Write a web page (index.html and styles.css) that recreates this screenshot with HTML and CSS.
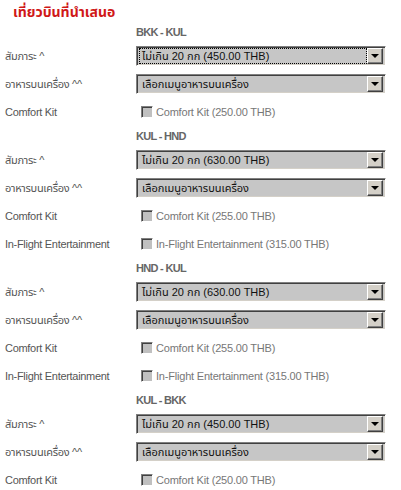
FILE: index.html
```html
<!DOCTYPE html>
<html lang="th">
<head>
  <meta charset="UTF-8" />
  <title>เที่ยวบินที่นำเสนอ</title>
  <link rel="stylesheet" href="styles.css">
</head>
<body>
  <div class="addons">
    <h2 class="title">เที่ยวบินที่นำเสนอ</h2>

    <!-- BKK - KUL -->
    <div class="leg-head">BKK - KUL</div>
    <div class="row">
      <div class="label">สัมภาระ ^</div>
      <div class="select focus"><span class="value">ไม่เกิน 20 กก (450.00 THB)</span><span class="arrow"></span></div>
    </div>
    <div class="row">
      <div class="label">อาหารบนเครื่อง ^^</div>
      <div class="select"><span class="value">เลือกเมนูอาหารบนเครื่อง</span><span class="arrow"></span></div>
    </div>
    <div class="row">
      <div class="label">Comfort Kit</div>
      <label class="check"><span class="box"></span>Comfort Kit (250.00 THB)</label>
    </div>

    <!-- KUL - HND -->
    <div class="leg-head">KUL - HND</div>
    <div class="row">
      <div class="label">สัมภาระ ^</div>
      <div class="select"><span class="value">ไม่เกิน 20 กก (630.00 THB)</span><span class="arrow"></span></div>
    </div>
    <div class="row">
      <div class="label">อาหารบนเครื่อง ^^</div>
      <div class="select"><span class="value">เลือกเมนูอาหารบนเครื่อง</span><span class="arrow"></span></div>
    </div>
    <div class="row">
      <div class="label">Comfort Kit</div>
      <label class="check"><span class="box"></span>Comfort Kit (255.00 THB)</label>
    </div>
    <div class="row">
      <div class="label">In-Flight Entertainment</div>
      <label class="check"><span class="box"></span>In-Flight Entertainment (315.00 THB)</label>
    </div>

    <!-- HND - KUL -->
    <div class="leg-head">HND - KUL</div>
    <div class="row">
      <div class="label">สัมภาระ ^</div>
      <div class="select"><span class="value">ไม่เกิน 20 กก (630.00 THB)</span><span class="arrow"></span></div>
    </div>
    <div class="row">
      <div class="label">อาหารบนเครื่อง ^^</div>
      <div class="select"><span class="value">เลือกเมนูอาหารบนเครื่อง</span><span class="arrow"></span></div>
    </div>
    <div class="row">
      <div class="label">Comfort Kit</div>
      <label class="check"><span class="box"></span>Comfort Kit (255.00 THB)</label>
    </div>
    <div class="row">
      <div class="label">In-Flight Entertainment</div>
      <label class="check"><span class="box"></span>In-Flight Entertainment (315.00 THB)</label>
    </div>

    <!-- KUL - BKK -->
    <div class="leg-head">KUL - BKK</div>
    <div class="row">
      <div class="label">สัมภาระ ^</div>
      <div class="select"><span class="value">ไม่เกิน 20 กก (450.00 THB)</span><span class="arrow"></span></div>
    </div>
    <div class="row">
      <div class="label">อาหารบนเครื่อง ^^</div>
      <div class="select"><span class="value">เลือกเมนูอาหารบนเครื่อง</span><span class="arrow"></span></div>
    </div>
    <div class="row">
      <div class="label">Comfort Kit</div>
      <label class="check"><span class="box"></span>Comfort Kit (250.00 THB)</label>
    </div>
  </div>
</body>
</html>
```

FILE: styles.css
```css
body {
  margin: 0;
  background: #fff;
  font-family: "Liberation Sans", Tahoma, "Noto Sans Thai", "Noto Sans", sans-serif;
  font-size: 11px;
  color: #555;
}

.addons {
  padding: 0 5px;
}

.title {
  margin: 0;
  height: 22px;
  line-height: 24px;
  padding-left: 8px;
  font-size: 14px;
  font-weight: bold;
  color: #d01818;
}

.leg-head {
  height: 20px;
  line-height: 20px;
  padding-left: 131px;
  font-size: 11px;
  font-weight: bold;
  letter-spacing: -0.7px;
  color: #666;
}

.row {
  display: grid;
  grid-template-columns: 131px 250px;
  align-items: center;
  height: 28px;
}

.label {
  letter-spacing: -0.3px;
  white-space: nowrap;
}

.select {
  display: flex;
  align-items: center;
  height: 20px;
  box-sizing: border-box;
  background: #c6c6c6;
  border: 1px solid;
  border-color: #808080 #fff #fff #808080;
  box-shadow: inset 1px 1px 0 #404040, inset -1px -1px 0 #d4d0c8;
  padding: 2px;
  color: #111;
  font-size: 11px;
}

.value {
  flex: 1;
  height: 14px;
  line-height: 14px;
  padding-left: 2px;
  border: 1px solid transparent;
  white-space: nowrap;
  overflow: hidden;
}

.focus .value {
  border: 1px dotted #000;
}

.arrow {
  position: relative;
  width: 16px;
  height: 16px;
  box-sizing: border-box;
  background: #d4d0c8;
  border: 1px solid;
  border-color: #fff #404040 #404040 #fff;
  box-shadow: inset -1px -1px 0 #808080;
}

.arrow::after {
  content: "";
  position: absolute;
  left: 3px;
  top: 5px;
  border-left: 4px solid transparent;
  border-right: 4px solid transparent;
  border-top: 4px solid #000;
}

.check {
  display: flex;
  align-items: center;
  padding-left: 5px;
  color: #777;
  letter-spacing: -0.2px;
  white-space: nowrap;
}

.box {
  width: 12px;
  height: 12px;
  box-sizing: border-box;
  margin-right: 3px;
  background: #c0c0c0;
  border: 1px solid;
  border-color: #808080 #fff #fff #808080;
  box-shadow: inset 1px 1px 0 #404040;
}
```
